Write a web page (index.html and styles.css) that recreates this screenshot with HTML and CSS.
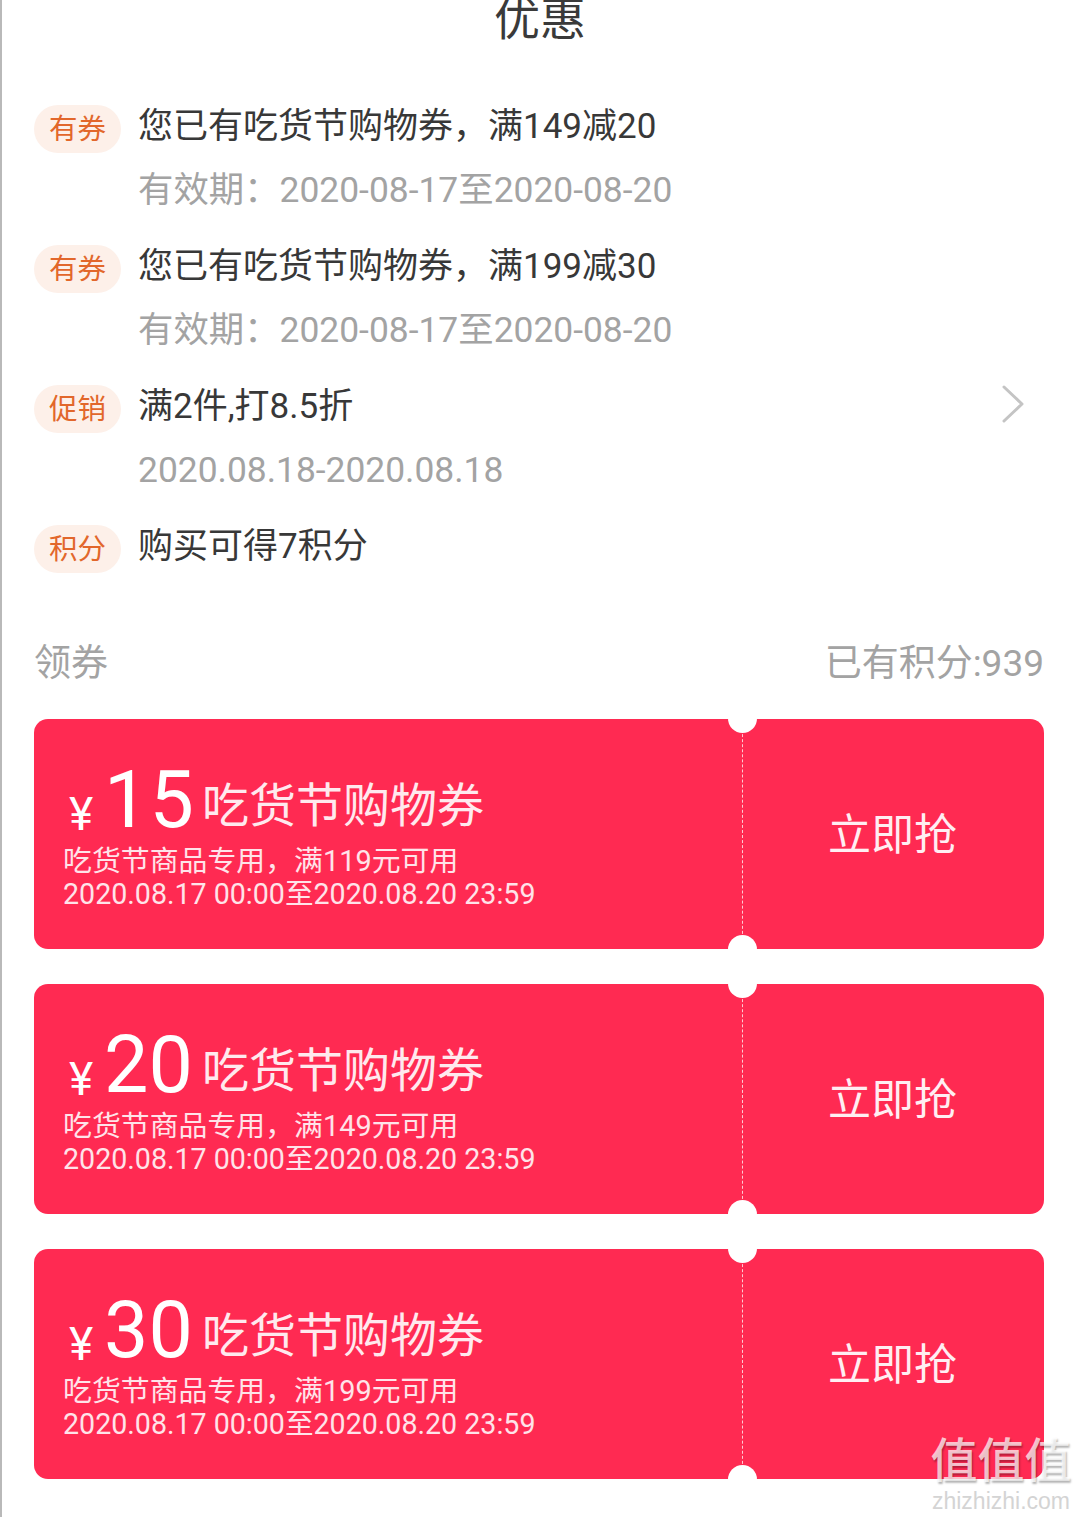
FILE: index.html

```html
<!DOCTYPE html>
<html lang="zh-CN">
<head>
    <meta charset="UTF-8">
    <meta name="viewport" content="width=device-width, initial-scale=1.0">
    <title>优惠</title>
    <link rel="stylesheet" href="styles.css">
</head>
<body>
    <div class="container">
        <!-- Header -->
        <h1 class="title">优惠</h1>

        <!-- Offers -->
        <div class="offers">
            <div class="offer">
                <span class="badge">有券</span>
                <div class="offer-body">
                    <p class="offer-name">您已有吃货节购物券，满149减20</p>
                    <p class="offer-date">有效期：2020-08-17至2020-08-20</p>
                </div>
            </div>
            <div class="offer">
                <span class="badge">有券</span>
                <div class="offer-body">
                    <p class="offer-name">您已有吃货节购物券，满199减30</p>
                    <p class="offer-date">有效期：2020-08-17至2020-08-20</p>
                </div>
            </div>
            <div class="offer">
                <span class="badge">促销</span>
                <div class="offer-body">
                    <p class="offer-name">满2件,打8.5折</p>
                    <p class="offer-date">2020.08.18-2020.08.18</p>
                </div>
                <svg class="chevron" width="24" height="38" viewBox="0 0 24 38">
                    <path d="M3 2 L21 19 L3 36" fill="none" stroke="#c4c4c4" stroke-width="3" stroke-linecap="round" stroke-linejoin="round"/>
                </svg>
            </div>
            <div class="offer">
                <span class="badge">积分</span>
                <div class="offer-body">
                    <p class="offer-name">购买可得7积分</p>
                </div>
            </div>
        </div>

        <!-- Coupons -->
        <div class="section-head">
            <span>领券</span>
            <span>已有积分:939</span>
        </div>

        <div class="coupons">
            <div class="coupon">
                <div class="coupon-info">
                    <div class="coupon-top">
                        <span class="yen">¥</span>
                        <span class="amount amount-spaced">15</span>
                        <span class="coupon-name">吃货节购物券</span>
                    </div>
                    <p class="coupon-desc">吃货节商品专用，满119元可用</p>
                    <p class="coupon-time">2020.08.17 00:00至2020.08.20 23:59</p>
                </div>
                <div class="coupon-action">立即抢</div>
                <span class="notch notch-top"></span>
                <span class="notch notch-bottom"></span>
            </div>
            <div class="coupon">
                <div class="coupon-info">
                    <div class="coupon-top">
                        <span class="yen">¥</span>
                        <span class="amount">20</span>
                        <span class="coupon-name">吃货节购物券</span>
                    </div>
                    <p class="coupon-desc">吃货节商品专用，满149元可用</p>
                    <p class="coupon-time">2020.08.17 00:00至2020.08.20 23:59</p>
                </div>
                <div class="coupon-action">立即抢</div>
                <span class="notch notch-top"></span>
                <span class="notch notch-bottom"></span>
            </div>
            <div class="coupon">
                <div class="coupon-info">
                    <div class="coupon-top">
                        <span class="yen">¥</span>
                        <span class="amount">30</span>
                        <span class="coupon-name">吃货节购物券</span>
                    </div>
                    <p class="coupon-desc">吃货节商品专用，满199元可用</p>
                    <p class="coupon-time">2020.08.17 00:00至2020.08.20 23:59</p>
                </div>
                <div class="coupon-action">立即抢</div>
                <span class="notch notch-top"></span>
                <span class="notch notch-bottom"></span>
            </div>
        </div>
    </div>

    <!-- Watermark -->
    <div class="watermark">
        <div class="watermark-logo">值值值</div>
        <div class="watermark-url">zhizhizhi.com</div>
    </div>
</body>
</html>
```

FILE: styles.css

```css
/* General Styles */
body {
    margin: 0;
    height: 1517px;
    overflow: hidden;
    position: relative;
    font-family: Roboto, "Noto Sans CJK SC", sans-serif;
    background-color: #ffffff;
    border-left: 2px solid #b9b9b9;
    box-sizing: border-box;
}

p {
    margin: 0;
}

.container {
    padding: 0 36px 0 32px;
}

/* Header */
.title {
    margin: -11px 0 56px;
    font-size: 46px;
    font-weight: 400;
    line-height: 60px;
    text-align: center;
    text-indent: 2px;
    color: #3a3a3a;
}

/* Offers */
.offers {
    display: flex;
    flex-direction: column;
    gap: 35px;
}

.offer {
    display: flex;
    align-items: flex-start;
}

.badge {
    width: 87px;
    height: 48px;
    line-height: 50px;
    margin-right: 17px;
    border-radius: 24px;
    background-color: #fdf0e9;
    color: #e2672b;
    font-size: 28.5px;
    text-align: center;
    flex-shrink: 0;
}

.offer-body {
    flex: 1;
}

.offer-name {
    font-size: 35px;
    line-height: 44px;
    color: #383838;
}

.offer-date {
    margin-top: 21px;
    font-size: 35.4px;
    line-height: 40px;
    color: #a3a3a3;
}

.chevron {
    margin: 0 19px 0 0;
}

/* Section head */
.section-head {
    display: flex;
    justify-content: space-between;
    margin: 71px 0 35px;
    font-size: 37px;
    line-height: 40px;
    color: #a3a3a3;
}

/* Coupons */
.coupons {
    display: flex;
    flex-direction: column;
    gap: 35px;
}

.coupon {
    display: flex;
    position: relative;
    height: 230px;
    border-radius: 14px;
    background-color: #ff2a52;
    color: #fff;
}

.coupon-info {
    width: 708px;
    padding: 39px 0 0 29px;
    box-sizing: border-box;
}

.coupon-top {
    display: flex;
    align-items: center;
    height: 84px;
    margin-bottom: 3px;
}

.yen {
    margin: 28px 0 0 6px;
    width: 35px;
    font-size: 46px;
}

.amount {
    width: 98px;
    font-size: 79px;
    line-height: 84px;
}

.amount-spaced {
    letter-spacing: 1px;
}

.coupon-name {
    margin-top: 2px;
    font-size: 47px;
    color: #ffe9ee;
}

.coupon-desc,
.coupon-time {
    font-size: 28.9px;
    line-height: 33px;
    color: #ffe3e9;
}

.coupon-time {
    font-size: 28.6px;
}

.coupon-action {
    flex: 1;
    padding: 0 2px 6px 0;
    display: flex;
    align-items: center;
    justify-content: center;
    font-size: 43px;
    border-left: 1px dashed rgba(255, 255, 255, 0.75);
    color: #ffeef2;
}

.notch {
    position: absolute;
    left: 694px;
    width: 29px;
    height: 29px;
    border-radius: 50%;
    background-color: #fff;
}

.notch-top {
    top: -15px;
}

.notch-bottom {
    bottom: -15px;
}

/* Watermark */
.watermark {
    position: absolute;
    left: 926px;
    top: 1432px;
    width: 146px;
    text-align: center;
    color: rgba(255, 255, 255, 0.72);
}

.watermark-logo {
    font-size: 47px;
    line-height: 58px;
    font-weight: 500;
    text-shadow: 1px 2px 2px rgba(0, 0, 0, 0.3);
}

.watermark-url {
    font-family: "Liberation Sans", sans-serif;
    font-size: 23px;
    line-height: 22px;
    color: #d4d4d4;
}
```
